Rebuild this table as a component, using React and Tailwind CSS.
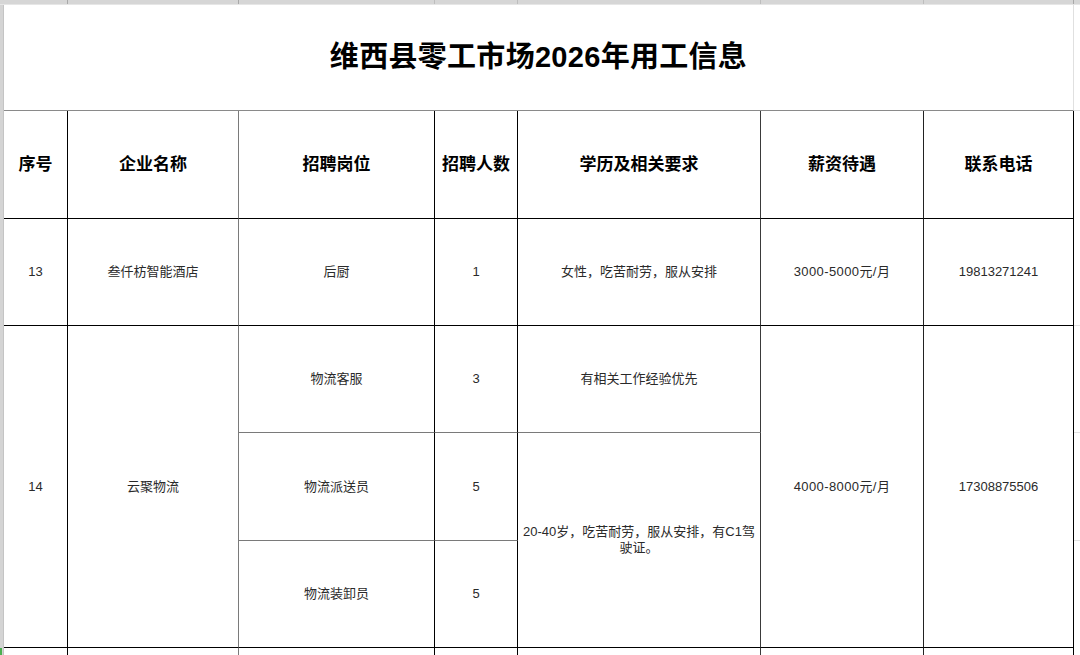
import React from 'react'

const body = "font-['Liberation_Sans','Noto_Sans_CJK_SC',sans-serif]"

// one table cell: right / bottom borders given per cell, like a spreadsheet
const Cell = ({ children, className = '', head = false }) => (
  <div
    className={`flex items-center justify-center text-center ${head ? 'text-[17px] font-bold text-black' : 'text-[13px] text-[#2a2a2a]'} ${className}`}
  >
    {children}
  </div>
)

const App = () => {
  return (
    <div className={`w-[1080px] h-[655px] overflow-hidden bg-white ${body}`}>

      {/* column header strip of the sheet */}
      <div className="h-[5px] flex bg-[#d6d6d6] border-b border-[#e6e6e6]">
        <div className="w-[68px] border-r border-[#a8a8a8]"></div>
        <div className="w-[171px] border-r border-[#a8a8a8]"></div>
        <div className="w-[196px] border-r border-[#bdbdbd]"></div>
        <div className="w-[83px] border-r border-[#bdbdbd]"></div>
        <div className="w-[243px] border-r border-[#bdbdbd]"></div>
        <div className="w-[163px] border-r border-[#bdbdbd]"></div>
        <div className="w-[150px] border-r border-[#a8a8a8]"></div>
      </div>

      <div className="flex">
        {/* row header strip */}
        <div className="w-[4px] h-[650px] flex flex-col bg-[#d4d4d4] border-r border-[#c4c4c4]">
          <div className="flex-1"></div>
          <div className="h-[7px] w-[2px] bg-[#4caf50]"></div>
        </div>

        <div className="flex flex-col">
          {/* title */}
          <div className="flex">
            <div className="w-[1070px] h-[106px] flex items-center justify-center border-b border-[#8a8a8a] border-r border-r-[#e0e0e0]">
              <h1 className="text-[29px] font-bold text-black tracking-[0.3px]">维西县零工市场2026年用工信息</h1>
            </div>
            <div className="w-[6px] h-[106px] border-b border-[#e0e0e0]"></div>
          </div>

          <div className="flex">
            <div className="grid grid-cols-[64px_171px_196px_83px_243px_163px_150px] grid-rows-[108px_107px_107px_108px_107px_10px]">
              {/* header */}
              <Cell head className="border-r border-b border-black">序号</Cell>
              <Cell head className="border-r border-b border-black border-r-[#7a7a7a]">企业名称</Cell>
              <Cell head className="border-r border-b border-black">招聘岗位</Cell>
              <Cell head className="border-r border-b border-black">招聘人数</Cell>
              <Cell head className="border-r border-b border-black border-r-[#3a3a3a]">学历及相关要求</Cell>
              <Cell head className="border-r border-b border-black border-r-[#222]">薪资待遇</Cell>
              <Cell head className="border-r border-b border-black">联系电话</Cell>

              {/* 13 */}
              <Cell className="border-r border-b border-black">13</Cell>
              <Cell className="border-r border-b border-black border-r-[#7a7a7a]">叁仟枋智能酒店</Cell>
              <Cell className="border-r border-b border-black">后厨</Cell>
              <Cell className="border-r border-b border-black">1</Cell>
              <Cell className="border-r border-b border-black border-r-[#3a3a3a]">女性，吃苦耐劳，服从安排</Cell>
              <Cell className="border-r border-b border-black border-r-[#222] tracking-[0.4px]">3000-5000元/月</Cell>
              <Cell className="border-r border-b border-black">19813271241</Cell>

              {/* 14 */}
              <Cell className="row-span-3 border-r border-b border-black">14</Cell>
              <Cell className="row-span-3 border-r border-b border-black border-r-[#7a7a7a]">云聚物流</Cell>
              <Cell className="border-r border-b border-r-black border-b-[#7a7a7a]">物流客服</Cell>
              <Cell className="border-r border-b border-r-black border-b-[#7a7a7a]">3</Cell>
              <Cell className="border-r border-b border-r-[#3a3a3a] border-b-[#7a7a7a]">有相关工作经验优先</Cell>
              <Cell className="row-span-3 border-r border-b border-black border-r-[#222] tracking-[0.4px]">4000-8000元/月</Cell>
              <Cell className="row-span-3 border-r border-b border-black">17308875506</Cell>

              <Cell className="col-start-3 border-r border-b border-r-black border-b-[#7a7a7a]">物流派送员</Cell>
              <Cell className="border-r border-b border-r-black border-b-[#7a7a7a]">5</Cell>
              <Cell className="row-span-2 border-r border-b border-black border-r-[#3a3a3a] px-[2px] leading-[16px]">
                <span>20-40岁，吃苦耐劳，服从安排，有C1驾<br />驶证。</span>
              </Cell>

              <Cell className="col-start-3 border-r border-b border-black">物流装卸员</Cell>
              <Cell className="border-r border-b border-black">5</Cell>

              {/* next row, cut off */}
              <div className="border-r border-black"></div>
              <div className="border-r border-[#7a7a7a]"></div>
              <div className="border-r border-black"></div>
              <div className="border-r border-black"></div>
              <div className="border-r border-[#3a3a3a]"></div>
              <div className="border-r border-[#222]"></div>
              <div className="border-r border-black"></div>
            </div>

            {/* cells to the right of the table */}
            <div className="w-[6px] flex flex-col">
              <div className="h-[108px]"></div>
              <div className="h-[107px] border-b border-[#e2e2e2]"></div>
              <div className="h-[107px] border-b border-[#e2e2e2]"></div>
              <div className="h-[108px] border-b border-[#e2e2e2]"></div>
            </div>
          </div>
        </div>
      </div>
    </div>
  )
}

export default App
